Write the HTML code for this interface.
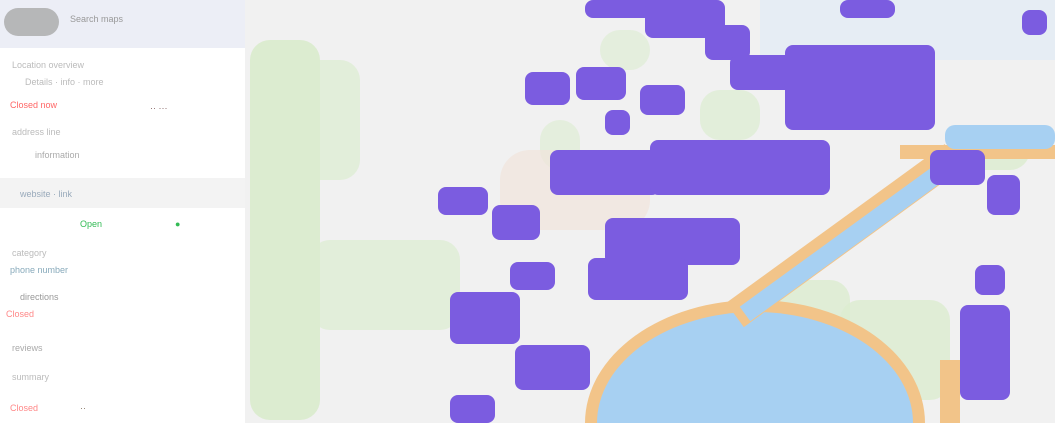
<!DOCTYPE html>
<html style="width:1055px;height:423px;overflow:hidden"><head><meta charset="utf-8"><style>
*{margin:0;padding:0;box-sizing:border-box}
html,body{width:1055px;height:423px;overflow:hidden}
body{background:#f1f1f1;position:relative;font-family:"Liberation Sans",sans-serif}
.a{position:absolute}
.p{position:absolute;background:#7b5ce0;border-radius:8px}
.g{position:absolute;background:#dcecd0;border-radius:20px}
.w{position:absolute;background:#a7d0f2}
.side{position:absolute;left:0;top:0;width:245px;height:423px;background:#fff}
.hdr{position:absolute;left:0;top:0;width:245px;height:48px;background:#eceef6}
.t{position:absolute;font-size:9px;color:#bbb;white-space:nowrap}
</style></head><body>
<div class="g" style="left:250px;top:40px;width:70px;height:380px"></div>
<div class="g" style="left:300px;top:60px;width:60px;height:120px;opacity:.7"></div>
<div class="g" style="left:310px;top:240px;width:150px;height:90px;opacity:.7"></div>
<div class="g" style="left:700px;top:90px;width:60px;height:50px;opacity:.7"></div>
<div class="g" style="left:760px;top:280px;width:90px;height:90px;opacity:.8"></div>
<div class="g" style="left:840px;top:300px;width:110px;height:100px;opacity:.8"></div>
<div class="g" style="left:950px;top:130px;width:80px;height:40px;opacity:.8"></div>
<div class="g" style="left:540px;top:120px;width:40px;height:50px;opacity:.6"></div>
<div class="g" style="left:600px;top:30px;width:50px;height:40px;opacity:.6"></div>
<div class="a" style="left:500px;top:150px;width:150px;height:80px;background:#f1e4dc;border-radius:30px;opacity:.7"></div>
<div class="a" style="left:760px;top:0;width:295px;height:60px;background:#e4ecf5;opacity:.8"></div>
<div class="a" style="left:585px;top:300px;width:340px;height:123px;border-radius:50% 50% 0 0/100% 100% 0 0;background:#f2c489"></div>
<div class="w" style="left:597px;top:312px;width:316px;height:111px;border-radius:50% 50% 0 0/100% 100% 0 0"></div>
<div class="a" style="left:735px;top:300px;width:270px;height:30px;background:#f2c489;transform:rotate(-36deg);transform-origin:left center"></div>
<div class="w" style="left:745px;top:305px;width:255px;height:18px;transform:rotate(-36deg);transform-origin:left center"></div>
<div class="a" style="left:900px;top:145px;width:155px;height:14px;background:#f2c489"></div>
<div class="w" style="left:945px;top:125px;width:110px;height:24px;border-radius:10px"></div>
<div class="a" style="left:940px;top:360px;width:20px;height:63px;background:#f2c489"></div>
<div class="p" style="left:585px;top:0;width:115px;height:18px"></div>
<div class="p" style="left:645px;top:0;width:80px;height:38px"></div>
<div class="p" style="left:705px;top:25px;width:45px;height:35px"></div>
<div class="p" style="left:525px;top:72px;width:45px;height:33px"></div>
<div class="p" style="left:576px;top:67px;width:50px;height:33px"></div>
<div class="p" style="left:640px;top:85px;width:45px;height:30px"></div>
<div class="p" style="left:605px;top:110px;width:25px;height:25px"></div>
<div class="p" style="left:730px;top:55px;width:110px;height:35px"></div>
<div class="p" style="left:785px;top:45px;width:150px;height:85px"></div>
<div class="p" style="left:840px;top:0;width:55px;height:18px"></div>
<div class="p" style="left:550px;top:150px;width:110px;height:45px"></div>
<div class="p" style="left:650px;top:140px;width:180px;height:55px"></div>
<div class="p" style="left:438px;top:187px;width:50px;height:28px"></div>
<div class="p" style="left:492px;top:205px;width:48px;height:35px"></div>
<div class="p" style="left:605px;top:218px;width:135px;height:47px"></div>
<div class="p" style="left:588px;top:258px;width:100px;height:42px"></div>
<div class="p" style="left:510px;top:262px;width:45px;height:28px"></div>
<div class="p" style="left:450px;top:292px;width:70px;height:52px"></div>
<div class="p" style="left:515px;top:345px;width:75px;height:45px"></div>
<div class="p" style="left:450px;top:395px;width:45px;height:28px"></div>
<div class="p" style="left:930px;top:150px;width:55px;height:35px"></div>
<div class="p" style="left:987px;top:175px;width:33px;height:40px"></div>
<div class="p" style="left:975px;top:265px;width:30px;height:30px"></div>
<div class="p" style="left:960px;top:305px;width:50px;height:95px"></div>
<div class="p" style="left:1022px;top:10px;width:25px;height:25px"></div>
<div class="side"></div>
<div class="hdr"></div>
<div class="a" style="left:4px;top:8px;width:55px;height:28px;background:#a9a9a9;border-radius:14px;opacity:.8"></div>
<div class="t" style="left:70px;top:14px;color:#999">Search maps</div>
<div class="t" style="left:12px;top:60px">Location overview</div>
<div class="t" style="left:25px;top:77px">Details · info · more</div>
<div class="t" style="left:10px;top:100px;color:#f66">Closed now</div>
<div class="t" style="left:150px;top:103px;color:#866">·· ···</div>
<div class="t" style="left:12px;top:127px">address line</div>
<div class="t" style="left:35px;top:150px;color:#aaa">information</div>
<div class="a" style="left:0;top:178px;width:245px;height:30px;background:#f3f3f3"></div>
<div class="t" style="left:20px;top:189px;color:#9ab">website · link</div>
<div class="t" style="left:80px;top:219px;color:#3b5">Open</div>
<div class="t" style="left:175px;top:219px;color:#3b5">●</div>
<div class="t" style="left:12px;top:248px">category</div>
<div class="t" style="left:10px;top:265px;color:#8ab">phone number</div>
<div class="t" style="left:20px;top:292px;color:#999">directions</div>
<div class="t" style="left:6px;top:309px;color:#f88">Closed</div>
<div class="t" style="left:12px;top:343px;color:#aaa">reviews</div>
<div class="t" style="left:12px;top:372px">summary</div>
<div class="t" style="left:10px;top:403px;color:#f88">Closed</div>
<div class="t" style="left:80px;top:403px;color:#876">··</div>
</body></html>
